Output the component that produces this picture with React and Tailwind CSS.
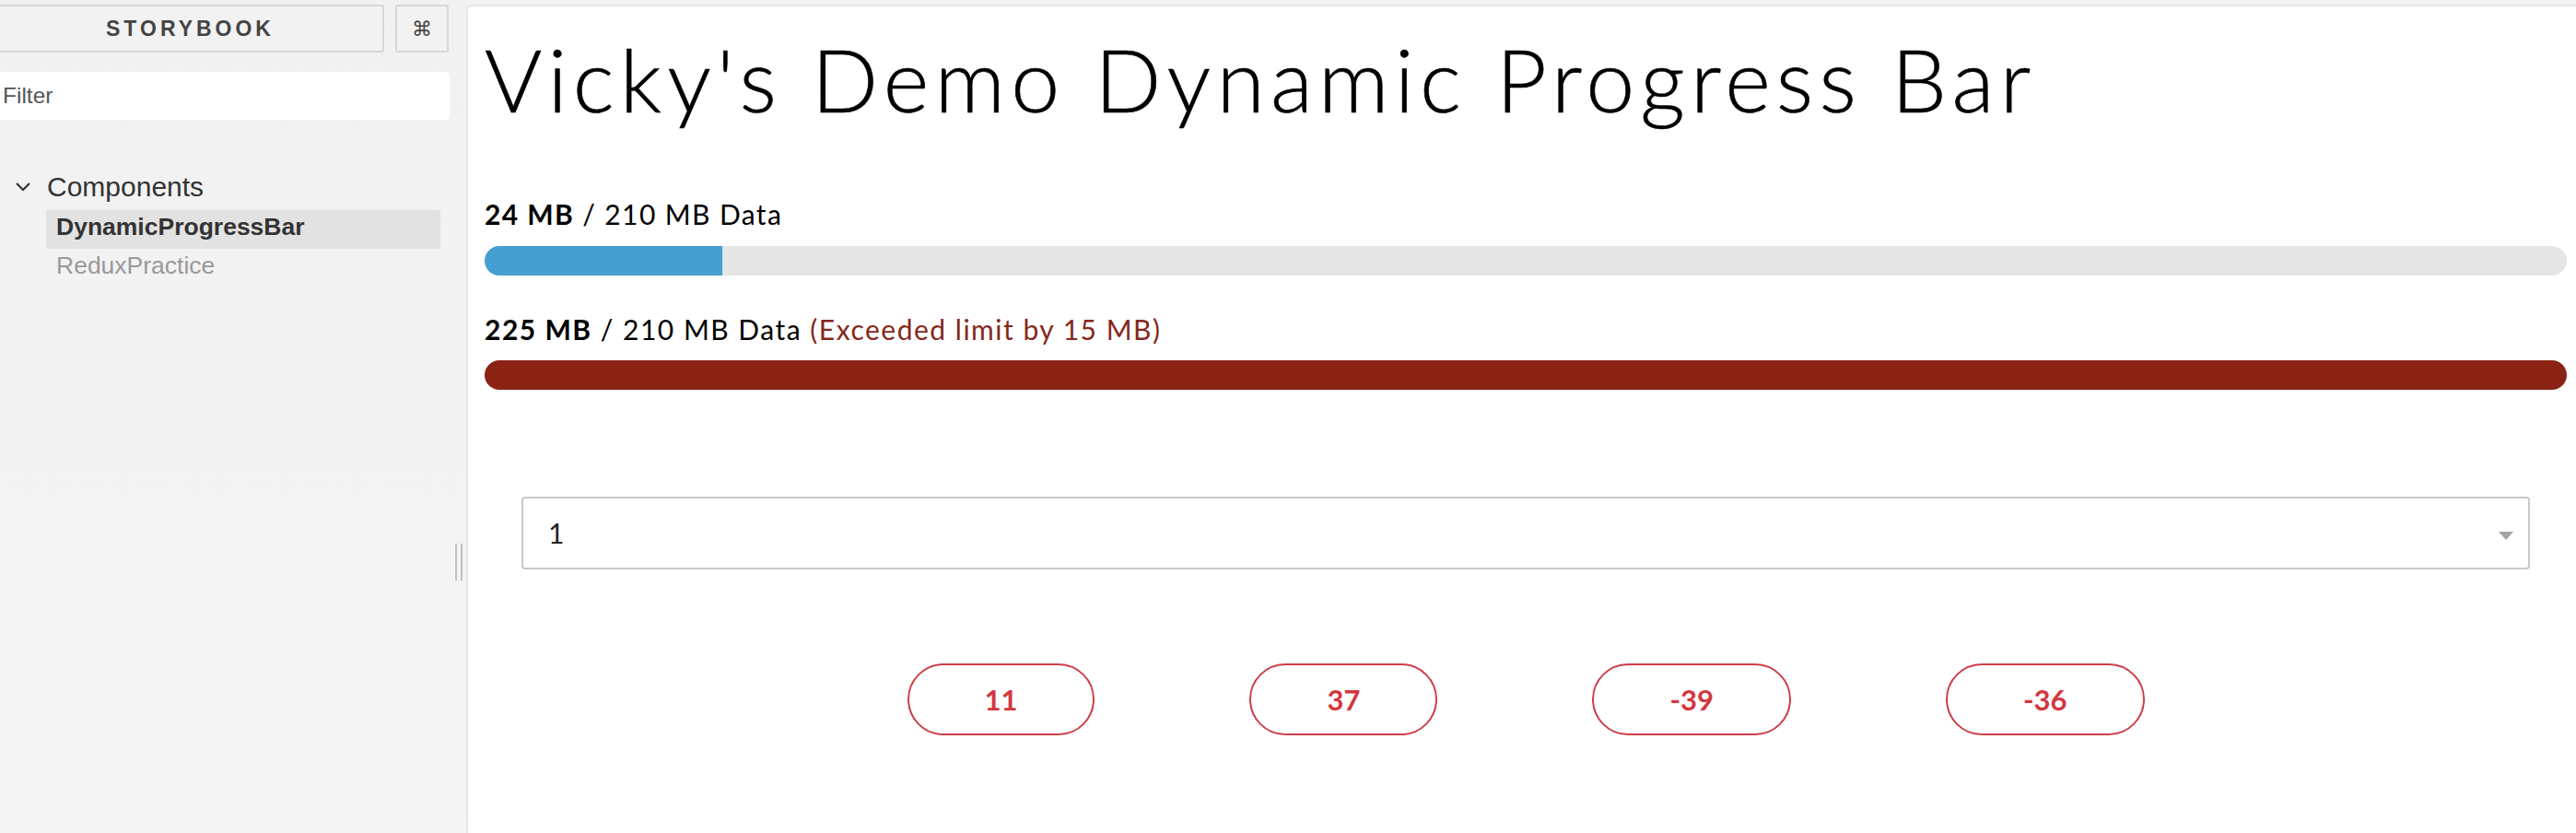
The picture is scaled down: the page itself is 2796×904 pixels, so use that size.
import React from "react";

const SIDE = { fontFamily: '"Liberation Sans", Arial, Helvetica, sans-serif' };
const MAIN = { fontFamily: 'Lato, "Noto Sans", sans-serif' };

function Bar({ pct, color }) {
  return (
    <div className="h-[32px] w-full rounded-full bg-[#e5e5e5] overflow-hidden">
      <div className={`h-full ${color}`} style={{ width: `${pct}%` }} />
    </div>
  );
}

export default function App() {
  const buttons = ["11", "37", "-39", "-36"];
  return (
    <div className="flex h-[904px] w-[2796px] overflow-hidden bg-[#f3f3f3]">
      {/* Sidebar */}
      <aside className="relative w-[506px] shrink-0 pr-[18px] bg-gradient-to-b from-[#f1f1f1] to-[#f5f5f5]" style={SIDE}>
        <div className="flex gap-[12px] pt-[5px]">
          <div className="-ml-[4px] flex h-[52px] w-[421px] items-center justify-center rounded-[3px] border-2 border-[#d6d6d6] bg-[#f2f2f2] text-[23px] font-bold tracking-[4px] text-[#444]">
            STORYBOOK
          </div>
          <div className="flex h-[52px] w-[58px] items-center justify-center rounded-[3px] border-2 border-[#d6d6d6] bg-[#f2f2f2] text-[22px] text-[#444]" style={{ fontFamily: '"DejaVu Sans", sans-serif' }}>
            ⌘
          </div>
        </div>
        <div className="-ml-[4px] mt-[21px] flex h-[52px] w-[492px] items-center rounded-[4px] bg-white pl-[7px] text-[24.5px] text-[#555]">
          Filter
        </div>
        <div className="mt-[54px]">
          <div className="flex h-[36px] items-center pl-[16px]">
            <svg width="18" height="11" viewBox="0 0 18 11" className="shrink-0">
              <polyline points="2,2 9,9 16,2" fill="none" stroke="#333" strokeWidth="2.2" />
            </svg>
            <span className="ml-[17px] text-[30px] text-[#333]">Components</span>
          </div>
          <div className="ml-[50px] mr-[10px] mt-[8px]">
            <div className="flex h-[42px] items-center bg-[#e2e2e2] pb-[4px] pl-[11px] text-[26.5px] font-bold text-[#333]">
              DynamicProgressBar
            </div>
            <div className="flex h-[42px] items-center pb-[4px] pl-[11px] text-[26.5px] text-[#999]">
              ReduxPractice
            </div>
          </div>
        </div>
        {/* drag handle */}
        <div className="absolute left-[494px] top-[590px] flex gap-[4px]">
          <div className="h-[40px] w-[2px] bg-[#c2c2c2]" />
          <div className="h-[40px] w-[2px] bg-[#c2c2c2]" />
        </div>
      </aside>

      {/* Main preview */}
      <main className="mt-[5px] flex-1 rounded-tl-[6px] border-l-2 border-t-2 border-[#e6e6e6] bg-white pl-[18px] pr-[10px]" style={MAIN}>
        <h1 className="mt-[31px] text-[95px] font-light leading-none tracking-[6.2px] text-black [-webkit-text-stroke:0.6px_black]">
          Vicky's Demo Dynamic Progress Bar
        </h1>

        <div className="mt-[84px] text-[30px] leading-none tracking-[1.4px] text-black">
          <span className="font-bold">24 MB</span> / 210 MB Data
        </div>
        <div className="mt-[20px]">
          <Bar pct={(24 / 210) * 100} color="bg-[#459fd1]" />
        </div>

        <div className="mt-[43px] text-[30px] leading-none tracking-[1.5px] text-black">
          <span className="font-bold">225 MB</span> / 210 MB Data{" "}
          <span className="text-[#84271b]">(Exceeded limit by 15 MB)</span>
        </div>
        <div className="mt-[19px]">
          <Bar pct={100} color="bg-[#8b2314]" />
        </div>

        <div className="mt-[116px] px-[40px]">
          <div className="relative flex h-[79px] items-center rounded-[4px] border-2 border-[#c8c8c8] bg-white pl-[27px] text-[30px] text-[#222]">
            1
            <svg width="16" height="9" viewBox="0 0 16 9" className="absolute right-[16px] top-[36px]">
              <polygon points="0,0 16,0 8,9" fill="#a3a3a3" />
            </svg>
          </div>
        </div>

        <div className="mt-[102px] flex justify-center gap-[168px]">
          {buttons.map((b) => (
            <button
              key={b}
              className="flex h-[78px] items-center rounded-full border-2 border-[#cc3f48] bg-white px-[82px] text-[31px] font-bold text-[#d2373f]"
            >
              {b}
            </button>
          ))}
        </div>
      </main>
    </div>
  );
}
